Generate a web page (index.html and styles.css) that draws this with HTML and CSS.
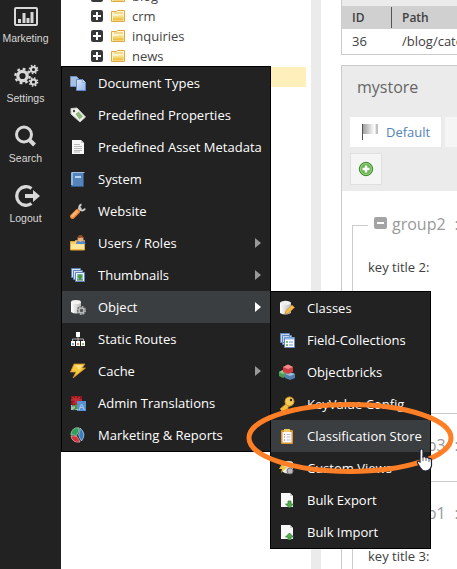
FILE: index.html
```html
<!DOCTYPE html>
<html lang="en">
<head>
<meta charset="utf-8">
<title>Object settings</title>
<link rel="stylesheet" href="styles.css">
</head>
<body>
<svg class="defs" width="0" height="0">
  <defs>
    <linearGradient id="blue" x2="1" y2="1"><stop stop-color="#dbe9fb"/><stop offset="1" stop-color="#8fb2e6"/></linearGradient>
    <linearGradient id="gold" x2="0" y2="1"><stop stop-color="#fff3b0"/><stop offset="1" stop-color="#e9b42c"/></linearGradient>
    <linearGradient id="can" x2="1" y2="0"><stop stop-color="#fff"/><stop offset="1" stop-color="#b9b9b9"/></linearGradient>
    <linearGradient id="flag" x2="1" y2="0"><stop stop-color="#999"/><stop offset=".35" stop-color="#c4c4c4"/><stop offset=".65" stop-color="#eee"/><stop offset=".8" stop-color="#fff"/><stop offset=".95" stop-color="#aaa"/><stop offset="1" stop-color="#ddd"/></linearGradient>
    <symbol id="plus" viewBox="0 0 12 12"><rect width="12" height="12" rx="2" fill="#36383c"/><path d="M6 2v8M2 6h8" stroke="#fff" stroke-width="2"/></symbol>
    <symbol id="folder" viewBox="0 0 16 16"><path d="M1.500 13.500v-10h5l1-1h7v11z" fill="#fff6cf" stroke="#dfa944"/><path d="M4 5h9" stroke="#e7b95a"/><path d="M3 12.500V8h5l1-1.500h4.500v6z" fill="url(#gold)"/></symbol>
    <symbol id="sheet" viewBox="0 0 16 16"><path d="M2 1h9l3 3v11H2z" fill="#f8f8f8"/><path d="M11 1v3h3" fill="#ccc"/></symbol>
  </defs>
</svg>
<div class="app">
  <nav class="sidebar">
    <a class="tool"><svg width="26" height="22" viewBox="0 0 26 22"><rect x="2" y="2" width="22" height="17" rx="1" fill="none" stroke="#d8d8d8" stroke-width="2"/><path d="M6.500 17v-4M11 17V7M15 17v-5M19 17V6" stroke="#d8d8d8" stroke-width="3"/></svg><span>Marketing</span></a>
    <a class="tool"><svg width="26" height="24" viewBox="0 0 26 24"><g fill="none" stroke="#d8d8d8"><circle cx="9.500" cy="12" r="4.700" stroke-width="3.200"/><circle cx="9.500" cy="12" r="7.200" stroke-width="2.200" stroke-dasharray="2.800 2.855"/><circle cx="20.500" cy="5.500" r="2.600" stroke-width="2"/><circle cx="20.500" cy="5.500" r="4.100" stroke-width="1.500" stroke-dasharray="1.600 1.620"/><circle cx="20.500" cy="18" r="2.600" stroke-width="2"/><circle cx="20.500" cy="18" r="4.100" stroke-width="1.500" stroke-dasharray="1.600 1.620"/></g></svg><span>Settings</span></a>
    <a class="tool"><svg width="26" height="24" viewBox="0 0 26 24"><circle cx="11" cy="10.500" r="7.500" fill="none" stroke="#d8d8d8" stroke-width="3"/><path d="M16.500 16l5 5" stroke="#d8d8d8" stroke-width="4"/></svg><span>Search</span></a>
    <a class="tool"><svg width="28" height="24" viewBox="0 0 28 24"><path d="M19.500 4.500A9.300 9.300 0 1 0 19.500 19.500" fill="none" stroke="#d8d8d8" stroke-width="3.300"/><path d="M13 10h8V6l7 6-7 6v-4h-8z" fill="#d8d8d8"/></svg><span>Logout</span></a>
  </nav>
  <aside class="tree">
    <div class="node"><svg width="12" height="12"><use href="#plus"/></svg><svg width="16" height="16"><use href="#folder"/></svg><span>blog</span></div>
    <div class="node"><svg width="12" height="12"><use href="#plus"/></svg><svg width="16" height="16"><use href="#folder"/></svg><span>crm</span></div>
    <div class="node"><svg width="12" height="12"><use href="#plus"/></svg><svg width="16" height="16"><use href="#folder"/></svg><span>inquiries</span></div>
    <div class="node"><svg width="12" height="12"><use href="#plus"/></svg><svg width="16" height="16"><use href="#folder"/></svg><span>news</span></div>
    <div class="node selected"></div>
  </aside>
  <div class="splitter"></div>
  <main class="content">
    <section class="grid">
      <div class="grid-title"></div>
      <div class="grid-row head"><span>ID</span><span>Path</span></div>
      <div class="grid-row"><span>36</span><span>/blog/category</span></div>
    </section>
    <section class="store">
      <header class="store-head">
        <h2>mystore</h2>
        <div class="tabs"><div class="tab active"><svg width="18" height="18" viewBox="0 0 18 18"><path d="M1 1h16v10H1z" fill="url(#flag)"/><path d="M1.500 1v16" stroke="#555"/></svg><span>Default</span></div><div class="tab next"></div></div>
        <div class="add"><svg width="16" height="16" viewBox="0 0 16 16"><circle cx="8" cy="8" r="6.700" fill="#6bb352" stroke="#398b32"/><circle cx="8" cy="8" r="5.500" fill="none" stroke="#9dd482"/><path d="M8 4.500v7M4.500 8h7" stroke="#fff" stroke-width="2.500"/></svg></div>
      </header>
      <div class="fields">
        <div class="group g2"><div class="legend"><i></i><span>group2</span><b>:::</b></div><label>key title 2:</label></div>
        <div class="group g3"><div class="legend"><i></i><span>group3</span><b>:::</b></div></div>
        <div class="group g1"><div class="legend"><i></i><span>group1</span><b>:::</b></div><label>key title 3:</label></div>
      </div>
    </section>
  </main>
</div>

<div class="menu main-menu">
  <div class="item"><svg viewBox="0 0 16 16"><path d="M.5 1.500h6l3 3v7h-9z" fill="#a9bfe0" stroke="#6d8fc4"/><path d="M6.500 4.500h6l3 3v8h-9z" fill="url(#blue)" stroke="#6089cb"/><path d="M12.500 4.500v3h3" fill="#fff" stroke="#88a9dc"/></svg><span>Document Types</span></div>
  <div class="item"><svg viewBox="0 0 16 16"><path d="M1 1.500l6-.5 8.500 9-5.500 5L1 7z" fill="#f4f4ef" stroke="#c9c9c2"/><path d="M5.500 7L8.500 4.500l4.500 5-3.500 3z" fill="#8fb878"/><circle cx="4" cy="4" r="1.200" fill="#444"/></svg><span>Predefined Properties</span></div>
  <div class="item"><svg viewBox="0 0 16 16"><use href="#sheet"/><path d="M4 5.500h6M4 7.500h8M4 9.500h8M4 11.500h8M4 13h6" stroke="#aaa" stroke-width=".8"/></svg><span>Predefined Asset Metadata</span></div>
  <div class="item"><svg viewBox="0 0 16 16"><path d="M1.500 1.500h12v14h-12z" fill="#5484b9" stroke="#2e5b91"/><path d="M2 2v12" stroke="#91b8df" stroke-width="2"/><path d="M1.500 1.500h13" stroke="#a3bfdd"/><rect x="5" y="5" width="6" height="2" fill="#b8d4ee"/></svg><span>System</span></div>
  <div class="item"><svg viewBox="0 0 16 16"><path d="M7 8.500l4-4" stroke="#c9c9c9" stroke-width="2.500"/><path d="M11.500 1.500a3 3 0 1 0 3.500 4" fill="none" stroke="#cfcfcf" stroke-width="2"/><path d="M2.500 13.500l5-5" stroke="#e57c30" stroke-width="5" stroke-linecap="round"/><path d="M2.500 13l4.500-4.500" stroke="#ffb16e" stroke-width="3" stroke-linecap="round"/></svg><span>Website</span></div>
  <div class="item"><svg viewBox="0 0 16 16"><path d="M.5 15V6.500h4l1-1h9V15z" fill="#f7cf64" stroke="#e0a637"/><path d="M6 9q0-4 4.500-4t5 4z" fill="#518acb"/><path d="M1 14V9h13v5z" fill="#ffe69a"/><circle cx="10.500" cy="3.800" r="3" fill="#edb082"/><path d="M7.500 3.500q0-3.500 3-3.500t3 3.500l-2-1z" fill="#8f4d27"/></svg><span>Users / Roles</span><em></em></div>
  <div class="item"><svg viewBox="0 0 16 16"><path d="M1.500 1.500h9v9h-9z" fill="#d4e2f3" stroke="#5f83b8"/><path d="M3.500 3.500h9v9h-9z" fill="#d4e2f3" stroke="#5f83b8"/><path d="M5.500 5.500h9v9h-9z" fill="#f4f8ff" stroke="#5f83b8"/><path d="M7 7h6v6H7z" fill="#8ebff0"/><circle cx="10" cy="9.500" r="2.300" fill="#4b9d36"/><path d="M7 13h6M10 10v3" stroke="#3d7e2b"/></svg><span>Thumbnails</span><em></em></div>
  <div class="item hover"><svg viewBox="0 0 16 16"><path d="M1 3v10q5 3 10 0V3z" fill="url(#can)"/><ellipse cx="6" cy="3" rx="5" ry="2" fill="#f3f3f3"/><circle cx="11.500" cy="11.500" r="4.600" fill="#55585a"/><circle cx="11.500" cy="11.500" r="2.500" fill="none" stroke="#bbb" stroke-width="1.500"/><circle cx="11.500" cy="11.500" r="3.800" fill="none" stroke="#bbb" stroke-width="1.300" stroke-dasharray="1.500 1.484"/></svg><span>Object</span><em></em></div>
  <div class="item"><svg viewBox="0 0 16 16"><path d="M8 5v3M2.500 10V8h11v2M8 8v3" fill="none" stroke="#aaa"/><path d="M6 1h4v5H6zM1 10h4v5H1zM6 10h4v5H6zM11 10h4v5h-4z" fill="#fff"/><path d="M2 13h2" stroke="#65a5e8" stroke-width="2"/><path d="M7 13h2" stroke="#e98759" stroke-width="2"/><path d="M12 13h2" stroke="#77bb67" stroke-width="2"/></svg><span>Static Routes</span></div>
  <div class="item"><svg viewBox="0 0 16 16"><path d="M4 1h11l-3 4h3.500L3 15l3-6H.5z" fill="#f7c73c" stroke="#d29228" stroke-width=".8"/><path d="M5 2h8l-4 5" fill="#ffe083"/></svg><span>Cache</span><em></em></div>
  <div class="item"><svg viewBox="0 0 16 16"><path d="M1 1h11v9H1z" fill="#8f1318"/><path d="M2 2l8 7M10 2L3 9M1 5h11M6 1v9" stroke="#c33138" stroke-width="1.500"/><path d="M7 6h9v10H7z" fill="#5791d2"/><text x="8.500" y="15" font-family="Liberation Sans" font-size="9" fill="#c7def5">A</text><path d="M1 10h7v5H1z" fill="#a8bdb1"/><path d="M2 11q4-1 4 1t-3 3M7 9v5" fill="none" stroke="#418a50" stroke-width="1.300"/></svg><span>Admin Translations</span></div>
  <div class="item"><svg viewBox="0 0 16 16"><path d="M9 .8Q2 0 .8 7.500l5.700 1Q9 5 9 .8z" fill="#2f9f59" stroke="#98d3a7" stroke-width=".8"/><path d="M10 1q7 6 1.500 13-2-3-3-6Q10 5 10 1z" fill="#397ec0" stroke="#acd1ef" stroke-width=".8"/><path d="M1 8.800l6 .7q2 3 3 5.500Q2 16 1 8.800z" fill="#c9343b" stroke="#ef9b9d" stroke-width=".8"/></svg><span>Marketing &amp; Reports</span></div>
</div>

<div class="menu sub-menu">
  <div class="item"><svg viewBox="0 0 16 16"><path d="M1 3v10q5 3 11 0V3z" fill="url(#can)"/><ellipse cx="6.500" cy="3" rx="5.500" ry="2.200" fill="#eee"/><path d="M6 14l1-3.500L13 5l2.500 2.500-6 5.500z" fill="#f3be45" stroke="#ca8833" stroke-width=".7"/></svg><span>Classes</span></div>
  <div class="item"><svg viewBox="0 0 16 16"><path d="M1.500 1.500h9v9h-9zM3.500 3.500h9v9h-9z" fill="#c2d6ef" stroke="#6187bf"/><path d="M5.500 5.500h10v10h-10z" fill="#fff" stroke="#6187bf"/><path d="M6 6.500h9" stroke="#8fb2df" stroke-width="2"/><path d="M7 10h2M7 13h2" stroke="#5aaa4a" stroke-width="1.500"/><path d="M10 10h4M10 13h4" stroke="#6894d3"/></svg><span>Field-Collections</span></div>
  <div class="item"><svg viewBox="0 0 16 16"><path d="M0 8l4-2 4 2v4l-4 2-4-2z" fill="#4f9a55"/><path d="M0 8l4-2 4 2-4 2z" fill="#90c78c"/><path d="M6 10l4-2 6 2v4l-5 2-5-2z" fill="#527fae"/><path d="M6 10l4-2 6 2-5 2z" fill="#9abde0"/><path d="M4 3l5-2.500L14 3v5l-5 2-5-2z" fill="#cf3e44"/><path d="M4 3l5-2.500L14 3 9 5z" fill="#f28b86"/></svg><span>Objectbricks</span></div>
  <div class="item"><svg viewBox="0 0 16 16"><path d="M1 13l7-6 3 3-2 1v2H7v2H3z" fill="#f2c03f" stroke="#cc8f27" stroke-width=".7"/><circle cx="10.500" cy="5.500" r="4.500" fill="#f7cc55" stroke="#ce932b"/><circle cx="12" cy="4" r="1.200" fill="#333"/></svg><span>KeyValue Config</span></div>
  <div class="item hover"><svg viewBox="0 0 16 16"><rect x="2" y="2" width="12" height="14" rx="1" fill="#d9972d"/><path d="M3.500 4h9v10.500h-9z" fill="#fafaff"/><rect x="5" y="1" width="6" height="3" fill="#edca62"/><path d="M5 6.500h1M5 9h1M5 12h1" stroke="#df5650"/><path d="M7.500 6.500h4M7.500 9h4M7.500 12h4" stroke="#b9bdd5"/></svg><span>Classification Store</span></div>
  <div class="item"><svg viewBox="0 0 16 16"><path d="M4 3v9q5 3 10 0V3z" fill="url(#can)"/><ellipse cx="9" cy="3" rx="5" ry="2" fill="#eee"/><path d="M3 4l4-1-2 4h3l-6 6 1-4H0z" fill="#f3c33e"/><circle cx="11" cy="11" r="3" fill="#bbb" stroke="#777"/></svg><span>Custom Views</span></div>
  <div class="item"><svg viewBox="0 0 16 16"><use href="#sheet"/><path d="M9 9h3v3h2.500l-4 4-4-4H9z" fill="#55ad4e" stroke="#2b7932" stroke-width=".7"/></svg><span>Bulk Export</span></div>
  <div class="item"><svg viewBox="0 0 16 16"><use href="#sheet"/><path d="M9 16h3v-3h2.500l-4-4-4 4H9z" fill="#55ad4e" stroke="#2b7932" stroke-width=".7"/></svg><span>Bulk Import</span></div>
</div>

<svg class="highlight" width="210" height="80" viewBox="0 0 210 80"><ellipse cx="105" cy="40" rx="101" ry="33.500" fill="none" stroke="#ff7f27" stroke-width="5"/></svg>
<svg class="cursor" width="18" height="26" viewBox="0 0 18 26"><path d="M4 14V3q0-2 1.500-2T7 3v6q2-1 3 .5 2-.7 3 1 2-.5 2.500 1.500v6q-1.500 5-6 5-3.500 0-5-3l-3-5q-.7-3 2.500-1z" fill="#fff" stroke="#223" stroke-width="1.200"/><path d="M7 8v5M10 9v4M13 10.500V14" stroke="#334" stroke-width=".8"/></svg>
</body>
</html>
```
FILE: styles.css
```css
* { box-sizing: border-box; }
body { margin: 0; width: 457px; height: 569px; overflow: hidden; position: relative; background: #fff; font: 13px/20px "Open Sans", sans-serif; color: #404040; }
svg { display: block; flex: none; }
.defs { position: absolute; }
.app { display: flex; height: 569px; }

.sidebar { width: 61px; flex: none; background: #222; color: #d8d8d8; font: 10.5px/14px "Liberation Sans", sans-serif; padding-top: 5px; }
.tool { display: flex; flex-direction: column; align-items: center; justify-content: flex-end; height: 60px; padding-right: 10px; }
.tool:first-child { height: 41px; }
.tool span { margin-top: 3px; margin-bottom: 1px; }

.tree { width: 250px; flex: none; overflow: hidden; padding: 0 5px 0 30px; margin-top: -14px; }
.node { height: 20px; display: flex; align-items: center; color: #444; }
.node svg + svg { margin-left: 7px; }
.node span { margin-left: 6px; }
.node.selected { background: #ffefbb; margin-top: 1px; margin-left: -30px; }

.splitter { width: 10px; flex: none; background: #ebebeb; }
.content { flex: 1; min-width: 0; padding-left: 20px; overflow: hidden; }
.grid { border-left: 1px solid #ccc; border-bottom: 1px solid #ccc; height: 55px; }
.grid-title { height: 6px; background: #ebebeb; }
.grid-row { display: flex; height: 25px; line-height: 25px; }
.grid-row span { flex: none; width: 50px; padding-left: 10px; }
.head { height: 23px; line-height: 23px; background: #d0d0d0; font-size: 12px; font-weight: 600; }
.head span:first-child { border-right: 1px solid #555; height: 21px; margin-top: 1px; line-height: 21px; }

.store { margin-top: 10px; border-left: 1px solid #ccc; border-top: 1px solid #ccc; height: 520px; }
.store-head { background: #ebebeb; height: 125px; padding-left: 8px; }
h2 { margin: 0; padding: 8px 0 0 7px; height: 51px; font-size: 16px; line-height: 26px; font-weight: 400; color: #666; }
.tabs { display: flex; gap: 4px; height: 30px; }
.tab { flex: none; display: flex; align-items: center; background: #f5f5f5; }
.active { width: 91px; background: #fff; color: #5283b7; padding-left: 11px; gap: 7px; }
.next { width: 60px; }
.add { margin-top: 6px; width: 32px; height: 32px; background: #f5f5f5; border: 1px solid #e0e0e0; display: flex; align-items: center; justify-content: center; }

.fields { padding-left: 10px; padding-top: 34px; }
.group { display: flow-root; border-left: 1px solid #ccc; border-bottom: 1px solid #ccc; width: 160px; }
.g2 { height: 189px; }
.g3 { height: 36px; margin-top: 32px; }
.g1 { height: 90px; margin-top: 32px; }
.legend { display: flex; align-items: center; height: 20px; margin-top: -11px; font-size: 16px; color: #999; }
.legend::before { content: ""; width: 15px; border-top: 1px solid #ccc; margin-right: 6px; margin-top: 2px; }
.legend i { width: 13px; height: 12px; border-radius: 2px; background: #fff; border: solid #a4a4a4; border-width: 5px 3px; margin-top: -3px; }
.legend span { margin-left: 5px; }
.legend b { margin-left: 9px; font-weight: 400; }
.group label { display: block; margin: 23px 0 0 15px; }

.menu { position: absolute; border: 1px solid #000; background: #222; color: #fff; }
.main-menu { left: 61px; top: 66px; width: 210px; }
.sub-menu { left: 270px; top: 291px; width: 161px; }
.item { height: 32px; display: flex; align-items: center; padding-left: 8px; white-space: nowrap; }
.item svg { width: 16px; height: 16px; margin-right: 12px; }
.item em { margin-left: auto; margin-right: 9px; border-left: 6px solid #999; border-top: 5px solid transparent; border-bottom: 5px solid transparent; }
.hover { background: #3b3e41; }
.hover em { border-left-color: #fff; }
.highlight { position: absolute; left: 245px; top: 398px; }
.cursor { position: absolute; left: 416px; top: 448px; }
```
